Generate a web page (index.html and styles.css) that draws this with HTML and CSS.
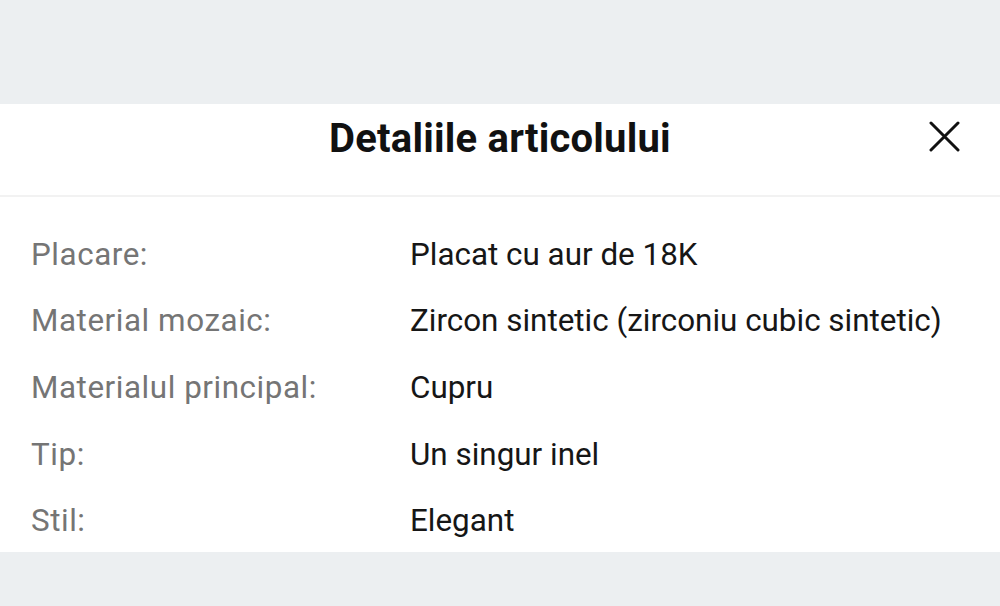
FILE: index.html
```html
<!DOCTYPE html>
<html lang="ro">
<head>
<meta charset="utf-8">
<link rel="stylesheet" href="styles.css">
</head>
<body>
<div class="top-gap"></div>
<section class="sheet">
  <header class="sheet-header">
    <h1 class="title">Detaliile articolului</h1>
    <button class="close" aria-label="Închide">
      <svg width="31" height="31" viewBox="0 0 31 31"><path d="M2 2 L29 29 M29 2 L2 29" stroke="#111" stroke-width="3" stroke-linecap="round"/></svg>
    </button>
  </header>
  <div class="divider"></div>
  <dl class="details">
    <div class="row"><dt>Placare:</dt><dd>Placat cu aur de 18K</dd></div>
    <div class="row"><dt>Material mozaic:</dt><dd>Zircon sintetic (zirconiu cubic sintetic)</dd></div>
    <div class="row"><dt>Materialul principal:</dt><dd>Cupru</dd></div>
    <div class="row"><dt>Tip:</dt><dd>Un singur inel</dd></div>
    <div class="row"><dt>Stil:</dt><dd>Elegant</dd></div>
  </dl>
</section>
</body>
</html>
```
FILE: styles.css
```css
html, body {
  margin: 0;
  padding: 0;
  background: #eceff1;
  font-family: Roboto, "Liberation Sans", sans-serif;
  width: 1000px;
  height: 606px;
  overflow: hidden;
}
.top-gap {
  height: 104px;
}
.sheet {
  background: #fff;
  height: 448px;
  overflow: hidden;
}
.sheet-header {
  height: 80px;
  padding-top: 11px;
  position: relative;
  display: flex;
  align-items: flex-start;
  justify-content: center;
}
.title {
  margin: 0;
  font-size: 40px;
  line-height: normal;
  font-weight: 700;
  color: #111;
  letter-spacing: 0.2px;
}
.close {
  position: absolute;
  right: 40px;
  top: 17px;
  border: 0;
  background: none;
  padding: 0;
  width: 31px;
  height: 31px;
  display: flex;
}
.divider {
  height: 2px;
  background: #f2f2f2;
}
.details {
  margin: 0;
  padding: 24px 0 0 31px;
}
.row {
  display: flex;
  height: 66.6px;
  align-items: center;
  font-size: 31.4px;
}
.row dt {
  width: 379px;
  color: #757575;
  letter-spacing: 0.55px;
}
.row dd {
  margin: 0;
  color: #161616;
}
```
